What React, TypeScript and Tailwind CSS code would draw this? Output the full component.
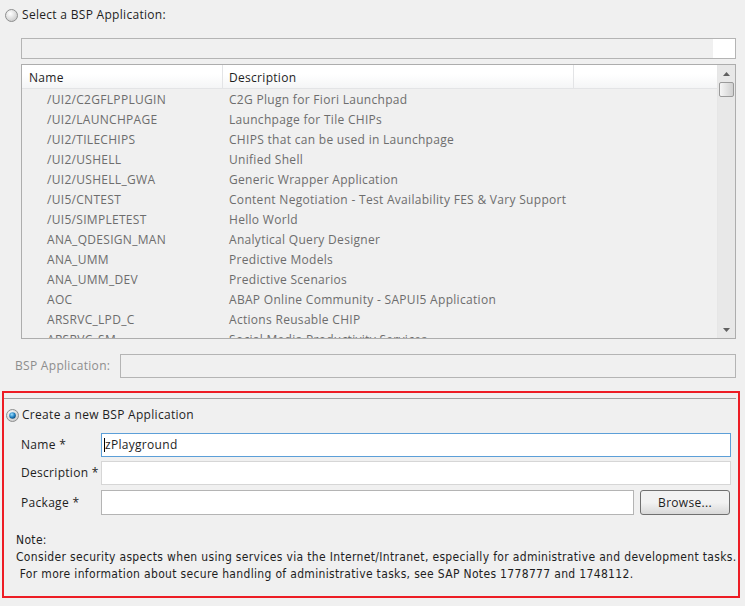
import React from "react";

const rows: [string, string][] = [
  ["/UI2/C2GFLPPLUGIN", "C2G Plugn for Fiori Launchpad"],
  ["/UI2/LAUNCHPAGE", "Launchpage for Tile CHIPs"],
  ["/UI2/TILECHIPS", "CHIPS that can be used in Launchpage"],
  ["/UI2/USHELL", "Unified Shell"],
  ["/UI2/USHELL_GWA", "Generic Wrapper Application"],
  ["/UI5/CNTEST", "Content Negotiation - Test Availability FES & Vary Support"],
  ["/UI5/SIMPLETEST", "Hello World"],
  ["ANA_QDESIGN_MAN", "Analytical Query Designer"],
  ["ANA_UMM", "Predictive Models"],
  ["ANA_UMM_DEV", "Predictive Scenarios"],
  ["AOC", "ABAP Online Community - SAPUI5 Application"],
  ["ARSRVC_LPD_C", "Actions Reusable CHIP"],
  ["ARSRVC_SM", "Social Media Productivity Services"],
];

function Radio({ checked }: { checked?: boolean }) {
  return (
    <svg width="13" height="13" viewBox="0 0 13 13" className="shrink-0">
      <defs>
        <radialGradient id={checked ? "rc" : "ru"} cx="40%" cy="35%" r="70%">
          <stop offset="0%" stopColor="#ffffff" />
          <stop offset="100%" stopColor="#c8c8c8" />
        </radialGradient>
        <radialGradient id="dot" cx="40%" cy="35%" r="70%">
          <stop offset="0%" stopColor="#9ee0ff" />
          <stop offset="60%" stopColor="#1f7fc0" />
          <stop offset="100%" stopColor="#0c3f6a" />
        </radialGradient>
      </defs>
      <circle cx="6.5" cy="6.5" r="6" fill={`url(#${checked ? "rc" : "ru"})`} stroke="#8e8f8f" strokeWidth="1" />
      {checked && <circle cx="6.5" cy="6.5" r="3.3" fill="url(#dot)" />}
    </svg>
  );
}

export default function App() {
  const font = { fontFamily: '"Open Sans", "Noto Sans", sans-serif' };
  return (
    <div
      className="w-[745px] h-[606px] bg-[#f0f0f0] text-[12px] tracking-[0.3px] text-[#1e1e1e] overflow-hidden relative"
      style={font}
    >
      {/* Select a BSP Application */}
      <div className="flex items-center gap-[4px] pl-[5px] pt-[8px] h-[22px]">
        <Radio />
        <span className="leading-[14px]">Select a BSP Application:</span>
      </div>

      <div className="ml-[21px] mr-[9px] mt-[16px] flex flex-col">
        {/* filter */}
        <div className="h-[21px] border border-[#b4b4b4] bg-[#f0f0f0] flex justify-end">
          <div className="w-[22px] h-full bg-white" />
        </div>

        {/* table */}
        <div className="mt-[5px] h-[275px] border border-[#adadad] bg-[#f0f0f0] flex overflow-hidden">
          <div className="flex-1 flex flex-col overflow-hidden">
            <div className="h-[24px] flex bg-gradient-to-b from-white from-40% to-[#f4f5f6] border-b border-[#e3e4e6] text-[#1e1e1e] shrink-0">
              <div className="w-[201px] border-r border-[#e3e4e6] pl-[7px] pt-[2px] flex items-center">Name</div>
              <div className="w-[351px] border-r border-[#e3e4e6] pl-[6px] pt-[2px] flex items-center">Description</div>
              <div className="flex-1" />
            </div>
            {rows.map(([n, d]) => (
              <div key={n} className="h-[20px] pt-[2px] flex items-center text-[#6d6d6d] shrink-0">
                <div className="w-[201px] pl-[25px] whitespace-nowrap">{n}</div>
                <div className="pl-[6px] whitespace-nowrap">{d}</div>
              </div>
            ))}
          </div>
          {/* scrollbar */}
          <div className="w-[18px] bg-[#e8e8e8] border-l border-[#e6e6e6] flex flex-col items-center relative">
            <div className="h-[17px] flex items-center justify-center">
              <svg width="7" height="4" viewBox="0 0 7 4"><path d="M0 4 L3.5 0 L7 4 Z" fill="#606060" /></svg>
            </div>
            <div className="w-[15px] h-[15px] border border-[#9a9a9a] rounded-[2px] bg-gradient-to-r from-[#f6f6f6] to-[#d0d0d0]" />
            <div className="flex-1" />
            <div className="h-[17px] flex items-center justify-center">
              <svg width="7" height="4" viewBox="0 0 7 4"><path d="M0 0 L3.5 4 L7 0 Z" fill="#606060" /></svg>
            </div>
          </div>
        </div>
      </div>

      {/* BSP Application */}
      <div className="flex items-center mt-[15px] ml-[15px] mr-[9px] h-[24px]">
        <span className="text-[#8d8d8d] w-[105px] whitespace-nowrap">BSP Application:</span>
        <div className="flex-1 h-[24px] border border-[#b4b4b4] bg-[#f0f0f0]" />
      </div>

      {/* Create new */}
      <div className="absolute left-[2px] top-[391px] w-[738px] h-[207px] border-2 border-[#ed1c24]">
        <div className="h-[6px] border-b border-[#a0a0a0] mr-[2px]" />
        <div className="flex items-center gap-[3px] pl-[2px] mt-[8px] h-[16px]">
          <Radio checked />
          <span>Create a new BSP Application</span>
        </div>
        <div className="pl-[17px] pr-[7px] mt-[10px] flex flex-col">
          <div className="flex items-center h-[24px]">
            <span className="w-[80px]">Name *</span>
            <div className="flex-1 h-[24px] border border-[#5c9fd8] bg-white flex items-center pl-[2px]">
              <span className="border-l border-black leading-[14px]">zPlayground</span>
            </div>
          </div>
          <div className="flex items-center h-[24px] mt-[4px]">
            <span className="w-[80px]">Description *</span>
            <div className="flex-1 h-[24px] border border-[#d6d6d6] bg-white" />
          </div>
          <div className="flex items-center h-[25px] mt-[5px]">
            <span className="w-[80px]">Package *</span>
            <div className="flex-1 h-[25px] border border-[#b4b4b4] bg-white" />
            <div className="ml-[6px] mr-[1px] w-[90px] h-[25px] border border-[#707070] rounded-[3px] bg-gradient-to-b from-[#f2f2f2] from-50% to-[#d9d9d9] flex items-center justify-center">
              Browse...
            </div>
          </div>
        </div>
        <div
          className="pl-[12px] mt-[17px] leading-[17px] text-[#1e1e1e] whitespace-nowrap tracking-[0.33px]"
          style={{ fontFamily: '"DejaVu Sans Condensed", "Liberation Sans Narrow", sans-serif' }}
        >
          <div>Note:</div>
          <div>Consider security aspects when using services via the Internet/Intranet, especially for administrative and development tasks.</div>
          <div>&nbsp;For more information about secure handling of administrative tasks, see SAP Notes 1778777 and 1748112.</div>
        </div>
      </div>
    </div>
  );
}
